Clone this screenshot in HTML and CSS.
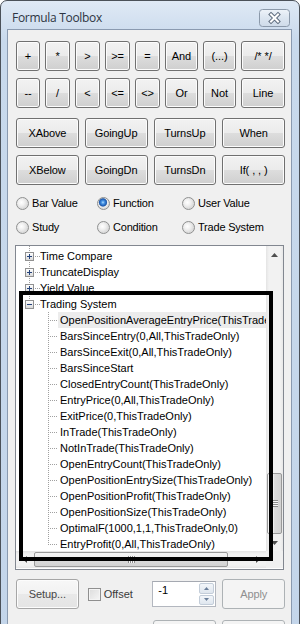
FILE: index.html
```html
<!DOCTYPE html>
<html lang="en">
<head>
    <meta charset="UTF-8">
    <title>Formula Toolbox</title>
    <link rel="stylesheet" href="styles.css">
</head>
<body>
    <div class="window">
        <div class="titlebar">
            <span class="title">Formula Toolbox</span>
            <svg class="close-btn" width="31" height="18" viewBox="0 0 31 18">
                <defs>
                    <linearGradient id="closeFill" x1="0" y1="0" x2="0" y2="1">
                        <stop offset="0" stop-color="#eef3f9"/>
                        <stop offset="0.5" stop-color="#dbe5f0"/>
                        <stop offset="1" stop-color="#cfdbe9"/>
                    </linearGradient>
                </defs>
                <rect x="0.5" y="0.5" width="30" height="17" rx="3" fill="url(#closeFill)" stroke="#8b99aa"/>
                <path d="M12 5.5 L19 12.5 M19 5.5 L12 12.5" stroke="#5f6d7f" stroke-width="4" stroke-linecap="square"/>
                <path d="M12 5.5 L19 12.5 M19 5.5 L12 12.5" stroke="#ffffff" stroke-width="2" stroke-linecap="square"/>
            </svg>
        </div>

        <div class="client">
            <!-- operators -->
            <div class="ops">
                <button class="btn">+</button>
                <button class="btn">*</button>
                <button class="btn">&gt;</button>
                <button class="btn">&gt;=</button>
                <button class="btn">=</button>
                <button class="btn">And</button>
                <button class="btn">(...)</button>
                <button class="btn">/* */</button>
                <button class="btn">--</button>
                <button class="btn">/</button>
                <button class="btn">&lt;</button>
                <button class="btn">&lt;=</button>
                <button class="btn">&lt;&gt;</button>
                <button class="btn">Or</button>
                <button class="btn">Not</button>
                <button class="btn">Line</button>
            </div>

            <!-- functions -->
            <div class="funcs">
                <button class="btn">XAbove</button>
                <button class="btn">GoingUp</button>
                <button class="btn">TurnsUp</button>
                <button class="btn">When</button>
                <button class="btn">XBelow</button>
                <button class="btn">GoingDn</button>
                <button class="btn">TurnsDn</button>
                <button class="btn">If( , , )</button>
            </div>

            <!-- categories -->
            <div class="radios">
                <label class="radio"><span class="dot"></span>Bar Value</label>
                <label class="radio"><span class="dot on"></span>Function</label>
                <label class="radio"><span class="dot"></span>User Value</label>
                <label class="radio"><span class="dot"></span>Study</label>
                <label class="radio"><span class="dot"></span>Condition</label>
                <label class="radio"><span class="dot"></span>Trade System</label>
            </div>

            <!-- tree -->
            <div class="tree">
                <div class="tree-main">
                    <div class="tree-clip">
                        <div class="tree-top"></div>
                        <div class="node n0"><span class="exp"></span><span class="lbl">Time Compare</span></div>
                        <div class="node n0"><span class="exp"></span><span class="lbl">TruncateDisplay</span></div>
                        <div class="node n0"><span class="exp"></span><span class="lbl">Yield Value</span></div>
                        <div class="node n0 last"><span class="exp minus"></span><span class="lbl">Trading System</span></div>
                        <div class="node n1 sel"><span class="lbl">OpenPositionAverageEntryPrice(ThisTradeOnly)</span></div>
                        <div class="node n1"><span class="lbl">BarsSinceEntry(0,All,ThisTradeOnly)</span></div>
                        <div class="node n1"><span class="lbl">BarsSinceExit(0,All,ThisTradeOnly)</span></div>
                        <div class="node n1"><span class="lbl">BarsSinceStart</span></div>
                        <div class="node n1"><span class="lbl">ClosedEntryCount(ThisTradeOnly)</span></div>
                        <div class="node n1"><span class="lbl">EntryPrice(0,All,ThisTradeOnly)</span></div>
                        <div class="node n1"><span class="lbl">ExitPrice(0,ThisTradeOnly)</span></div>
                        <div class="node n1"><span class="lbl">InTrade(ThisTradeOnly)</span></div>
                        <div class="node n1"><span class="lbl">NotInTrade(ThisTradeOnly)</span></div>
                        <div class="node n1"><span class="lbl">OpenEntryCount(ThisTradeOnly)</span></div>
                        <div class="node n1"><span class="lbl">OpenPositionEntrySize(ThisTradeOnly)</span></div>
                        <div class="node n1"><span class="lbl">OpenPositionProfit(ThisTradeOnly)</span></div>
                        <div class="node n1"><span class="lbl">OpenPositionSize(ThisTradeOnly)</span></div>
                        <div class="node n1"><span class="lbl">OptimalF(1000,1,1,ThisTradeOnly,0)</span></div>
                        <div class="node n1 last"><span class="lbl">EntryProfit(0,All,ThisTradeOnly)</span></div>
                    </div>
                    <div class="vscroll">
                        <div class="arrow"><svg width="7" height="4" viewBox="0 0 7 4"><polygon points="3.5,0 7,4 0,4" fill="#4f4f4f"/></svg></div>
                        <div class="vtrack">
                            <div class="thumb vthumb"><span class="grip"></span></div>
                        </div>
                        <div class="arrow"><svg width="7" height="4" viewBox="0 0 7 4"><polygon points="0,0 7,0 3.5,4" fill="#4f4f4f"/></svg></div>
                    </div>
                </div>
                <div class="hrow">
                    <div class="hscroll">
                        <div class="arrow"><svg width="4" height="7" viewBox="0 0 4 7"><polygon points="4,0 4,7 0,3.5" fill="#4f4f4f"/></svg></div>
                        <div class="htrack">
                            <div class="thumb hthumb"><span class="grip"></span></div>
                        </div>
                        <div class="arrow"><svg width="4" height="7" viewBox="0 0 4 7"><polygon points="0,0 4,3.5 0,7" fill="#4f4f4f"/></svg></div>
                    </div>
                    <div class="corner"></div>
                </div>
            </div>

            <!-- bottom bar -->
            <div class="actions">
                <button class="btn setup">Setup...</button>
                <label class="check"><span class="box"></span>Offset</label>
                <div class="spin">
                    <span class="spin-val">-1</span>
                    <span class="spin-btns">
                        <span class="spin-btn"><svg width="5" height="3" viewBox="0 0 5 3"><polygon points="2.5,0 5,3 0,3" fill="#6a7f9a"/></svg></span>
                        <span class="spin-btn"><svg width="5" height="3" viewBox="0 0 5 3"><polygon points="0,0 5,0 2.5,3" fill="#6a7f9a"/></svg></span>
                    </span>
                </div>
                <button class="btn off">Apply</button>
                <span></span>
                <span></span>
                <button class="btn off"></button>
                <button class="btn off"></button>
            </div>
        </div>

        <div class="marker"></div>
    </div>
</body>
</html>
```

FILE: styles.css
```css
* {
    box-sizing: border-box;
    margin: 0;
    padding: 0;
}
body {
    width: 300px;
    height: 624px;
    overflow: hidden;
    background: #fff;
    font-family: "Liberation Sans", Arial, sans-serif;
    font-size: 11px;
    color: #000;
}
.window {
    position: relative;
    height: 700px;
    border: 1px solid #4b5159;
    border-radius: 7px 7px 0 0;
    background: linear-gradient(#dfe9f5, #c8d9ec 40px, #c3d5ea);
    padding: 0 7px 0 6px;
}
.titlebar {
    height: 28px;
    display: flex;
    justify-content: space-between;
    align-items: flex-start;
    padding: 9px 2px 0 5px;
}
.title {
    font-family: "Open Sans", sans-serif;
    font-size: 12px;
    line-height: 16px;
    letter-spacing: -0.3px;
    color: #2d3542;
}
.close-btn {
    margin-top: -1px;
}
.client {
    height: 700px;
    border: 1px solid #8a9ab0;
    background: #f0f0f0;
    padding: 11px 6px 0 8px;
}

/* buttons */
.btn {
    height: 30px;
    border: 1px solid #707070;
    border-radius: 3px;
    background: linear-gradient(#f2f2f2, #ebebeb 50%, #dddddd 50%, #cfcfcf);
    box-shadow: inset 0 0 0 1px #fcfcfc;
    font-family: inherit;
    font-size: 11px;
    letter-spacing: -0.1px;
    color: #000;
    display: flex;
    align-items: center;
    justify-content: center;
}
.btn.setup {
    border-color: #a6a6a6;
    background: linear-gradient(#f7f7f7, #f2f2f2 50%, #e9e9e9 50%, #e4e4e4);
    color: #474747;
}
.btn.off {
    border-color: #adb2b5;
    background: #f4f4f4;
    box-shadow: none;
    color: #8f8f8f;
}
.ops {
    display: grid;
    grid-template-columns: 24px 25px 25px 25px 25px 33px 33px 44px;
    gap: 7px 5px;
}
.funcs {
    display: grid;
    grid-template-columns: repeat(4, 1fr);
    gap: 7px 6px;
    margin-top: 10px;
}

/* radios */
.radios {
    display: grid;
    grid-template-columns: 81px 85px 1fr;
    row-gap: 11px;
    margin-top: 12px;
}
.radio {
    display: flex;
    align-items: center;
    gap: 3px;
    height: 13px;
    line-height: 13px;
    letter-spacing: -0.2px;
}
.dot {
    width: 13px;
    height: 13px;
    flex: none;
    border-radius: 50%;
    border: 1px solid #8f9090;
    background: radial-gradient(circle at 40% 40%, #ffffff 0, #f1f1f1 3px, #dcdcdc 6px);
}
.dot.on {
    background: radial-gradient(circle at 45% 40%, #b3dcff 0, #4a97e6 1.5px, #1d5bb3 3.5px, #5d83b6 4px, #eeeeee 4.6px, #dcdcdc 6px);
}

/* tree */
.tree {
    margin: 11px 0 0 -1px;
    width: 269px;
    height: 325px;
    border: 1px solid #828790;
    background: #fff;
    display: flex;
    flex-direction: column;
}
.tree-main {
    display: flex;
    height: 305px;
}
.tree-clip {
    flex: 1;
    overflow: hidden;
}
.tree-top {
    height: 2px;
    background: repeating-linear-gradient(to bottom, #a0a0a0 0 1px, transparent 1px 2px) 13px 0 / 1px 100% no-repeat;
}
.node {
    display: flex;
    align-items: flex-start;
    height: 16px;
    line-height: 16px;
    white-space: nowrap;
}
.n0 {
    padding-left: 9px;
    background:
        repeating-linear-gradient(to bottom, #a0a0a0 0 1px, transparent 1px 2px) 13px 0 / 1px 100% no-repeat,
        repeating-linear-gradient(to right, #a0a0a0 0 1px, transparent 1px 2px) 13px 8px / 11px 1px no-repeat;
}
.n0.last {
    background-size: 1px 8px, 11px 1px;
}
.n1 {
    padding-left: 42px;
    background:
        repeating-linear-gradient(to bottom, #a0a0a0 0 1px, transparent 1px 2px) 32px 0 / 1px 100% no-repeat,
        repeating-linear-gradient(to right, #a0a0a0 0 1px, transparent 1px 2px) 32px 8px / 10px 1px no-repeat;
}
.n1.last {
    background-size: 1px 9px, 10px 1px;
}
.exp {
    width: 9px;
    height: 9px;
    flex: none;
    margin: 4px 4px 0 0;
    border: 1px solid #919191;
    background:
        linear-gradient(#24427a, #24427a) center / 5px 1px no-repeat,
        linear-gradient(#24427a, #24427a) center / 1px 5px no-repeat,
        linear-gradient(#ffffff, #d9d9d9);
}
.exp.minus {
    background:
        linear-gradient(#24427a, #24427a) center / 5px 1px no-repeat,
        linear-gradient(#ffffff, #d9d9d9);
}
.lbl {
    padding: 0 2px;
}
.sel .lbl {
    background: #ececec;
}

/* scrollbars */
.vscroll {
    width: 17px;
    display: flex;
    flex-direction: column;
    background: linear-gradient(to right, #e4e4e4, #f2f2f2 3px, #f2f2f2 14px, #e8e8e8);
}
.arrow {
    width: 17px;
    height: 17px;
    flex: none;
    display: flex;
    align-items: center;
    justify-content: center;
}
.vtrack {
    flex: 1;
    display: flex;
    flex-direction: column;
    justify-content: flex-end;
}
.thumb {
    border: 1px solid #999999;
    border-radius: 2px;
    display: flex;
    align-items: center;
    justify-content: center;
}
.vthumb {
    height: 61px;
    margin: 0 1px;
    background: linear-gradient(to right, #f5f5f5, #ececec 50%, #dcdcdc 50%, #d2d2d2);
}
.vthumb .grip {
    width: 7px;
    height: 7px;
    background: repeating-linear-gradient(to bottom, #8c8c8c 0 1px, #f8f8f8 1px 2px);
}
.hrow {
    display: flex;
    height: 17px;
}
.hscroll {
    flex: 1;
    display: flex;
    background: linear-gradient(#e4e4e4, #f2f2f2 3px, #f2f2f2 14px, #e8e8e8);
}
.htrack {
    flex: 1;
    display: flex;
    padding-left: 1px;
}
.hthumb {
    width: 194px;
    margin: 1px 0;
    background: linear-gradient(#f5f5f5, #ececec 50%, #dcdcdc 50%, #d2d2d2);
}
.hthumb .grip {
    width: 7px;
    height: 7px;
    background: repeating-linear-gradient(to right, #8c8c8c 0 1px, #f8f8f8 1px 2px);
}
.corner {
    width: 17px;
    background: #f0f0f0;
}

/* bottom bar */
.actions {
    display: grid;
    grid-template-columns: repeat(4, 1fr);
    grid-auto-rows: 30px;
    gap: 11px 6px;
    margin-top: 9px;
}
.check {
    display: flex;
    align-items: center;
    gap: 3px;
    padding-left: 3px;
    color: #3a3a3a;
}
.box {
    width: 13px;
    height: 13px;
    border: 1px solid #8f8f8f;
    background: linear-gradient(135deg, #dcdcdc, #f6f6f6);
    box-shadow: inset 0 0 0 1px #f4f4f4;
}
.spin {
    width: 64px;
    height: 26px;
    margin-left: -1px;
    align-self: center;
    display: flex;
    border: 1px solid #b3b7bf;
    border-top-color: #a5a9b1;
    background: #fff;
}
.spin-val {
    flex: 1;
    padding: 2px 0 0 5px;
    line-height: 13px;
}
.spin-btns {
    width: 15px;
    margin: 1px 1px 1px 0;
    display: flex;
    flex-direction: column;
    gap: 1px;
}
.spin-btn {
    flex: 1;
    display: flex;
    align-items: center;
    justify-content: center;
    border: 1px solid #c3cdd9;
    border-radius: 2px;
    background: linear-gradient(#f3f6fa, #dfe6ee);
}

/* annotation frame drawn over the tree */
.marker {
    position: absolute;
    left: 18px;
    top: 290px;
    width: 254px;
    height: 270px;
    border: 4px solid #000;
}
```
